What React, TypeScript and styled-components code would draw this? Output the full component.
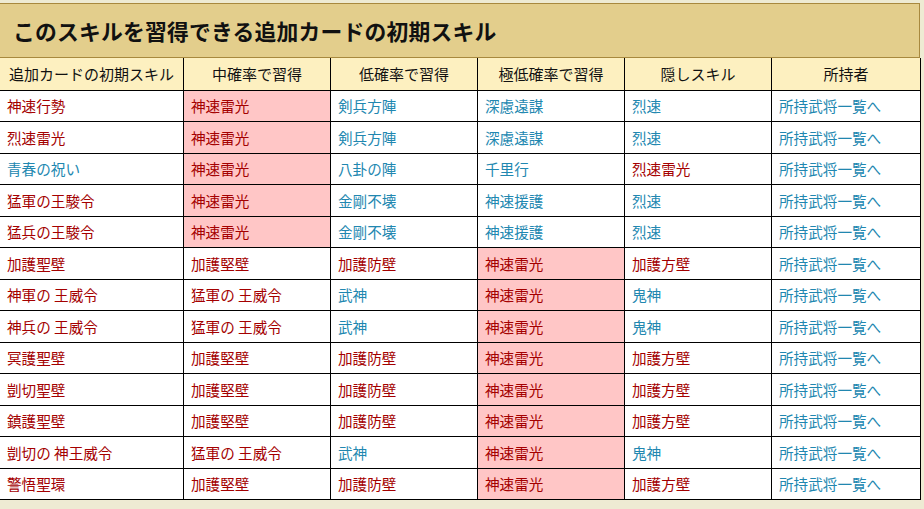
import React from "react";
import styled, { createGlobalStyle } from "styled-components";

const Global = createGlobalStyle`
  html, body { margin: 0; padding: 0; background: #eeebd3; }
  body { font-family: "Noto Sans CJK JP", "Noto Sans", sans-serif; }
`;

const Page = styled.div`
  padding-top: 3px;
  margin-left: -1px;
  width: 921px;
`;

const Title = styled.h2`
  margin: 0;
  box-sizing: border-box;
  height: 55px;
  background: #e3ce8c;
  border: 1px solid #a8893e;
  display: flex;
  align-items: center;
  padding-left: 13px;
  font-size: 21.8px;
  font-weight: 700;
  color: #111;
  letter-spacing: 0.2px;
`;

const Table = styled.table`
  border-collapse: collapse;
  table-layout: fixed;
  width: 921px;
  background: #fff;
`;

const Th = styled.th`
  background: #fdf0c0;
  border: 1px solid #000;
  border-top: none;
  height: 32px;
  padding: 0;
  font-size: 15px;
  font-weight: 400;
  color: #111;
  text-align: center;
  box-sizing: border-box;
`;

type Tone = "r" | "b";

const Td = styled.td<{ $tone: Tone; $hl?: boolean }>`
  border: 1px solid #000;
  height: 31.5px;
  padding: 0 0 0 7px;
  box-sizing: border-box;
  font-size: 14.6px;
  white-space: nowrap;
  background: ${(p) => (p.$hl ? "#ffc6c6" : "#fff")};
  color: ${(p) => (p.$tone === "r" ? "#a40000" : "#2187b0")};
`;

type Cell = [string, Tone, boolean?];

const rows: Cell[][] = [
  [["神速行勢", "r"], ["神速雷光", "r", true], ["剣兵方陣", "b"], ["深慮遠謀", "b"], ["烈速", "b"]],
  [["烈速雷光", "r"], ["神速雷光", "r", true], ["剣兵方陣", "b"], ["深慮遠謀", "b"], ["烈速", "b"]],
  [["青春の祝い", "b"], ["神速雷光", "r", true], ["八卦の陣", "b"], ["千里行", "b"], ["烈速雷光", "r"]],
  [["猛軍の王駿令", "r"], ["神速雷光", "r", true], ["金剛不壊", "b"], ["神速援護", "b"], ["烈速", "b"]],
  [["猛兵の王駿令", "r"], ["神速雷光", "r", true], ["金剛不壊", "b"], ["神速援護", "b"], ["烈速", "b"]],
  [["加護聖壁", "r"], ["加護堅壁", "r"], ["加護防壁", "r"], ["神速雷光", "r", true], ["加護方壁", "r"]],
  [["神軍の 王威令", "r"], ["猛軍の 王威令", "r"], ["武神", "b"], ["神速雷光", "r", true], ["鬼神", "b"]],
  [["神兵の 王威令", "r"], ["猛軍の 王威令", "r"], ["武神", "b"], ["神速雷光", "r", true], ["鬼神", "b"]],
  [["冥護聖壁", "r"], ["加護堅壁", "r"], ["加護防壁", "r"], ["神速雷光", "r", true], ["加護方壁", "r"]],
  [["剴切聖壁", "r"], ["加護堅壁", "r"], ["加護防壁", "r"], ["神速雷光", "r", true], ["加護方壁", "r"]],
  [["鎮護聖壁", "r"], ["加護堅壁", "r"], ["加護防壁", "r"], ["神速雷光", "r", true], ["加護方壁", "r"]],
  [["剴切の 神王威令", "r"], ["猛軍の 王威令", "r"], ["武神", "b"], ["神速雷光", "r", true], ["鬼神", "b"]],
  [["警悟聖環", "r"], ["加護堅壁", "r"], ["加護防壁", "r"], ["神速雷光", "r", true], ["加護方壁", "r"]],
];

const headers = ["追加カードの初期スキル", "中確率で習得", "低確率で習得", "極低確率で習得", "隠しスキル", "所持者"];
const widths = [184, 147, 147, 147, 147, 149];

export default function App() {
  return (
    <>
      <Global />
      <Page>
        <Title>このスキルを習得できる追加カードの初期スキル</Title>
        <Table>
          <colgroup>
            {widths.map((w, i) => (
              <col key={i} style={{ width: w }} />
            ))}
          </colgroup>
          <thead>
            <tr>
              {headers.map((h) => (
                <Th key={h}>{h}</Th>
              ))}
            </tr>
          </thead>
          <tbody>
            {rows.map((r, i) => (
              <tr key={i}>
                {r.map(([t, tone, hl], j) => (
                  <Td key={j} $tone={tone} $hl={hl}>
                    {t}
                  </Td>
                ))}
                <Td $tone="b">所持武将一覧へ</Td>
              </tr>
            ))}
          </tbody>
        </Table>
      </Page>
    </>
  );
}
